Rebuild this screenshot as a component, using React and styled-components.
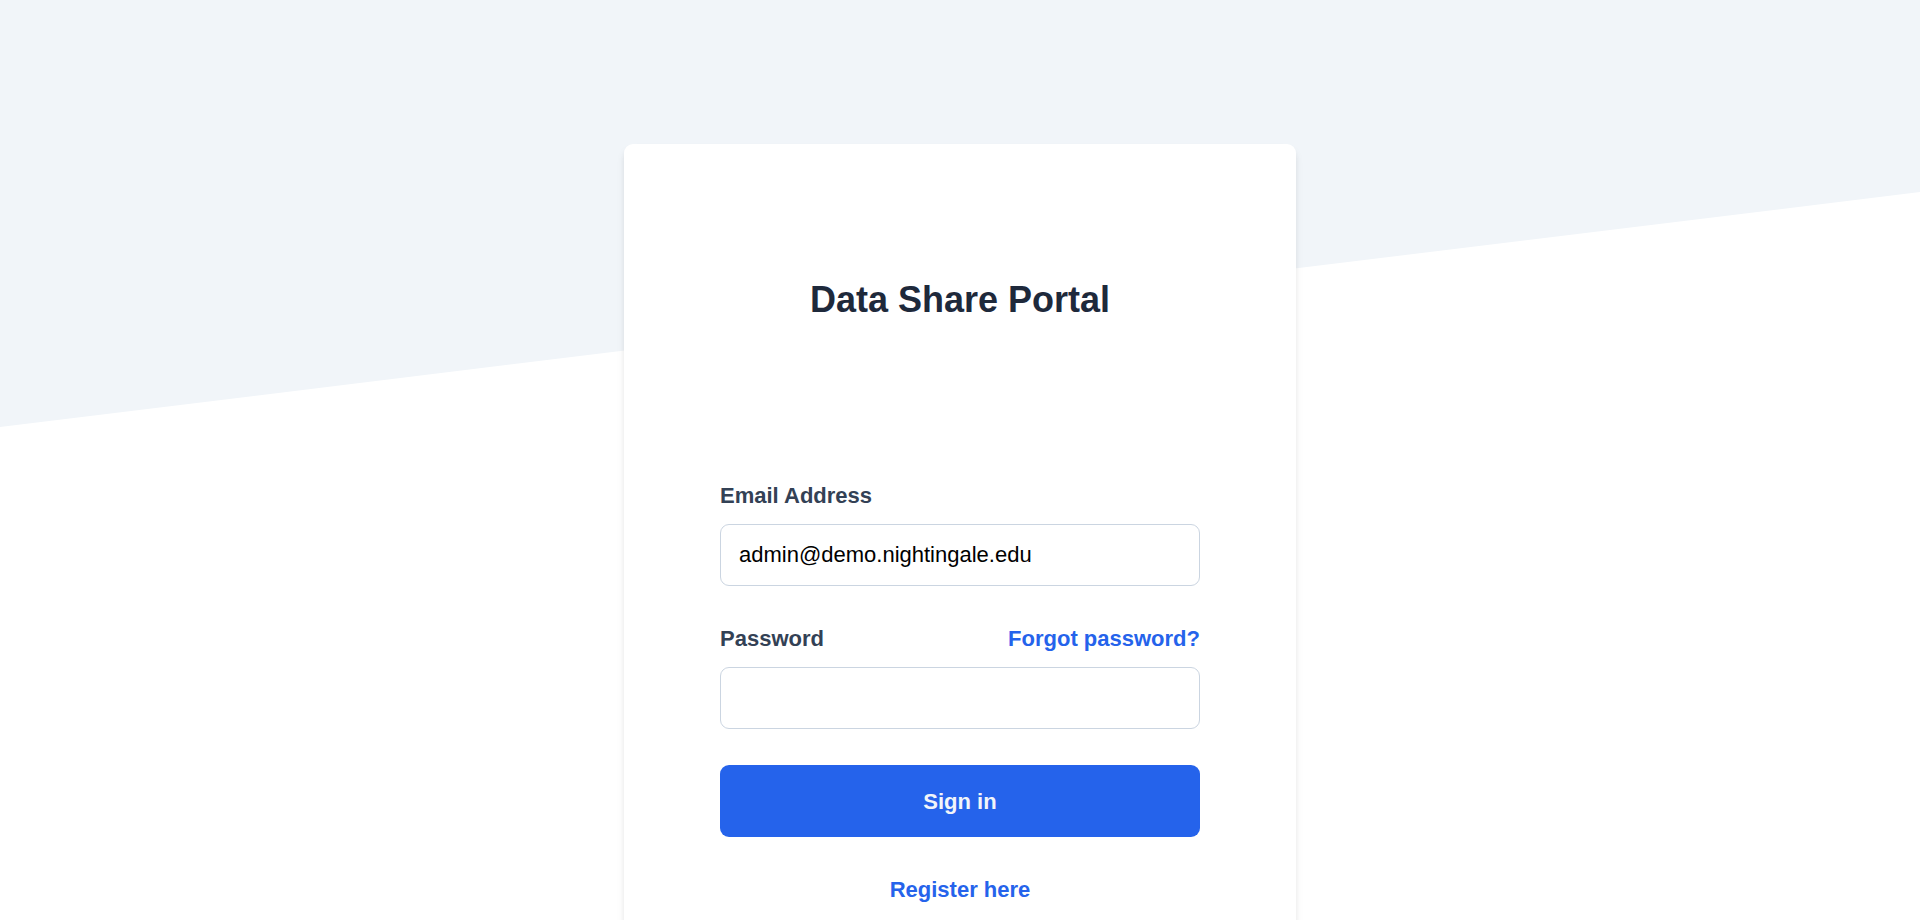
import React from "react";
import styled, { createGlobalStyle } from "styled-components";

const GlobalStyle = createGlobalStyle`
  *, *::before, *::after { box-sizing: border-box; }
  html { scrollbar-width: none; }
  body {
    margin: 0;
    background: #ffffff;
    color: #1e293b;
    font-family: "Liberation Sans", Arial, sans-serif;
    font-size: 22px;
    line-height: 33px;
  }
`;

const Page = styled.main`
  position: relative;
  min-height: 100vh;
  display: flex;
  justify-content: center;
  padding: 144px 24px;
`;

const Slant = styled.div`
  position: absolute;
  inset: 0 0 auto;
  height: 427px;
  background: #f1f5f9;
  clip-path: polygon(0 0, 100% 0, 100% 192px, 0 100%);
`;

const Card = styled.section`
  position: relative;
  width: 100%;
  max-width: 672px;
  padding: 132px 96px 96px;
  background: #ffffff;
  border-radius: 9px;
  box-shadow: 0 6px 9px -1px rgba(0, 0, 0, 0.1), 0 3px 6px -2px rgba(0, 0, 0, 0.06);
`;

const Title = styled.h1`
  margin: 0 0 155px;
  font-size: 36px;
  line-height: 48px;
  font-weight: 700;
  text-align: center;
`;

const Form = styled.form`
  display: flex;
  flex-direction: column;
  gap: 36px;
`;

const LabelRow = styled.div`
  display: flex;
  justify-content: space-between;
  margin-bottom: 12px;
`;

const Label = styled.label`
  color: #334155;
  font-weight: 700;
`;

const TextLink = styled.a`
  color: #2563eb;
  font-weight: 700;
  text-decoration: none;
`;

const Input = styled.input`
  display: block;
  width: 100%;
  height: 62px;
  padding: 0 18px;
  border: 1px solid #cbd5e1;
  border-radius: 9px;
  background: #ffffff;
  color: #000000;
  font: inherit;
  outline: none;

  &:focus-visible { border-color: #2563eb; }
`;

const SubmitButton = styled.button`
  height: 72px;
  border: 0;
  border-radius: 9px;
  background: #2563eb;
  color: #f1f5f9;
  font: inherit;
  font-weight: 700;
  cursor: pointer;
`;

const Register = styled.div`
  text-align: center;
`;

function Field({ id, label, action, ...inputProps }) {
  return (
    <div>
      <LabelRow>
        <Label htmlFor={id}>{label}</Label>
        {action}
      </LabelRow>
      <Input id={id} name={id} {...inputProps} />
    </div>
  );
}

export default function App() {
  return (
    <>
      <GlobalStyle />
      <Page>
        <Slant />
        <Card>
          <Title>Data Share Portal</Title>
          <Form onSubmit={(e) => e.preventDefault()}>
            <Field id="email" label="Email Address" type="email" defaultValue="admin@demo.nightingale.edu" />
            <Field
              id="password"
              label="Password"
              type="password"
              action={<TextLink href="#forgot">Forgot password?</TextLink>}
            />
            <SubmitButton type="submit">Sign in</SubmitButton>
            <Register>
              <TextLink href="#register">Register here</TextLink>
            </Register>
          </Form>
        </Card>
      </Page>
    </>
  );
}
